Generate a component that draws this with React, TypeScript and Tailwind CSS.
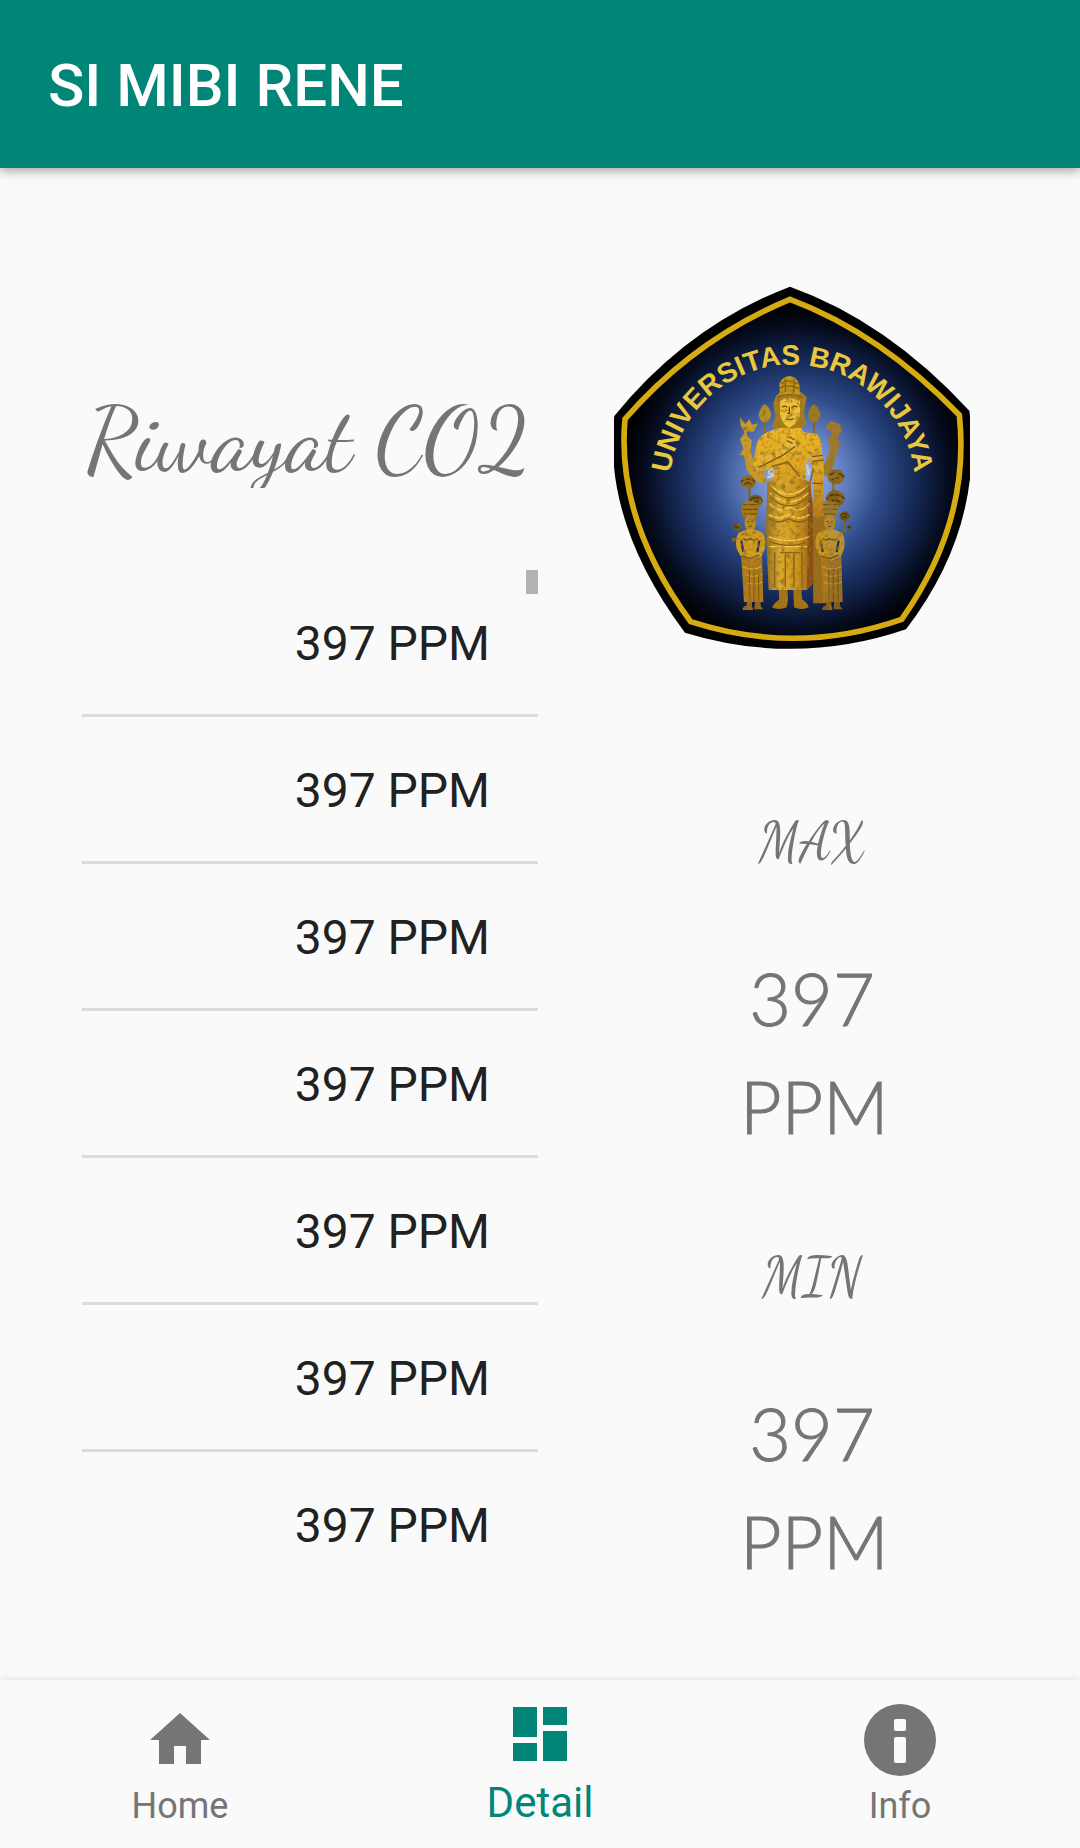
const readings = [397, 397, 397, 397, 397, 397, 397];

const stats = [
  { label: "MAX", value: 397 },
  { label: "MIN", value: 397 },
];

function Attendant() {
  return (
    <g>
      <path d="M424 712 L432 696 L450 692 L470 698 L476 712 L470 742 H428 Z" fill="#a87814" />
      <path d="M430 704 H472 M428 718 H474 M430 732 H470" stroke="#5e430d" strokeWidth="3" />
      <ellipse cx="451" cy="758" rx="17" ry="24" fill="#c08d1c" />
      <path d="M442 755 h6 M454 755 h6 M446 769 h10" stroke="#5a3c0a" strokeWidth="3" />
      <path
        d="M442 778 H462 L488 788 Q500 806 494 838 L484 862 L456 874 L424 862 L410 836 Q404 806 416 788 Z"
        fill="#d29d24"
      />
      <path d="M424 812 L430 846 M478 812 L472 846" stroke="#27304a" strokeWidth="7" />
      <path d="M430 806 q10 8 20 0 q12 8 24 0 M424 858 L450 866 L478 856" stroke="#7a5510" strokeWidth="5" fill="none" />
      <path d="M424 862 Q456 882 486 862 L490 996 H432 Z" fill="#b27b1a" />
      <path d="M428 890 q28 14 58 0 M430 912 q28 14 58 0 M432 936 q28 12 56 0" stroke="#dfb03a" strokeWidth="3" fill="none" />
      <path d="M448 900 V992 M462 896 V994 M476 900 V992" stroke="#7d5310" strokeWidth="3" />
      <path d="M440 994 h16 v14 l4 12 h-32 q0 -10 12 -14 Z M466 994 h16 v14 l8 10 h-28 Z" fill="#94641a" />
    </g>
  );
}

function Lotus({ x, y, r, fill }: { x: number; y: number; r: number; fill: string }) {
  return (
    <g>
      <ellipse cx={x} cy={y} rx={r} ry={r * 0.9} fill={fill} />
      <path
        d={`M${x - r} ${y} q${r} ${-r * 0.9} ${r * 2} 0 M${x - r * 0.5} ${y + r * 0.4} q${r * 0.5} ${-r * 0.6} ${r} 0`}
        stroke="#46350f"
        strokeWidth="4"
        fill="none"
      />
    </g>
  );
}

function UniversityCrest() {
  return (
    <svg viewBox="42 48 1068 1092" className="h-auto w-[356px]" role="img" aria-label="Universitas Brawijaya">
      <defs>
        <radialGradient id="glow" gradientUnits="userSpaceOnUse" cx="590" cy="625" r="520">
          <stop offset="0" stopColor="#a9bef0" />
          <stop offset="0.25" stopColor="#6a86c8" />
          <stop offset="0.48" stopColor="#2f4c8a" />
          <stop offset="0.7" stopColor="#142754" />
          <stop offset="0.88" stopColor="#050b1c" />
          <stop offset="1" stopColor="#000" />
        </radialGradient>
        <linearGradient id="gold" x1="0" y1="0" x2="0" y2="1">
          <stop offset="0" stopColor="#efb82a" />
          <stop offset="0.5" stopColor="#dca424" />
          <stop offset="1" stopColor="#b87a1a" />
        </linearGradient>
        <linearGradient id="skirt" x1="0" y1="0" x2="1" y2="0">
          <stop offset="0" stopColor="#97701a" />
          <stop offset="0.3" stopColor="#dcab2e" />
          <stop offset="0.65" stopColor="#d0961f" />
          <stop offset="1" stopColor="#9a5f16" />
        </linearGradient>
        <filter id="carved" x="0" y="0" width="100%" height="100%">
          <feTurbulence type="fractalNoise" baseFrequency="0.07" numOctaves="3" seed="4" result="noise" />
          <feColorMatrix
            in="noise"
            type="matrix"
            values="0 0 0 0 0.3  0 0 0 0 0.18  0 0 0 0 0.02  3 0 0 0 -1.4"
            result="shade"
          />
          <feComposite in="shade" in2="SourceAlpha" operator="in" result="relief" />
          <feMerge>
            <feMergeNode in="SourceGraphic" />
            <feMergeNode in="relief" />
          </feMerge>
        </filter>
        <path id="motto-arc" d="M211 690 A368 368 0 1 1 943 690" />
      </defs>

      <path
        d="M570 50 Q861 154 1108 422 Q1153 770 918 1078 Q590 1190 255 1088 Q7 757 43 438 Q264 166 570 50 Z"
        fill="#000"
      />
      <path
        d="M570 88 Q842 190 1078 435 Q1112 755 905 1048 Q590 1158 272 1055 Q48 750 75 447 Q285 206 570 88 Z"
        fill="url(#glow)"
        stroke="#d6ab12"
        strokeWidth="17"
      />

      <text fill="#e8c83c" className="font-['Liberation_Sans',sans-serif] text-[84px] font-bold" textAnchor="middle">
        <textPath href="#motto-arc" startOffset="50%">
          UNIVERSITAS BRAWIJAYA
        </textPath>
      </text>

      <g filter="url(#carved)">
        <path
          d="M495 445 V490 M642 445 V490 M448 650 V690 M700 640 V690 M735 740 V790"
          stroke="#7b6420"
          strokeWidth="6"
        />
        <path d="M476 434 Q480 412 494 402 Q510 412 514 434 Q508 456 494 458 Q480 456 476 434 Z" fill="#b5912a" />
        <path d="M624 434 Q628 412 642 402 Q656 412 662 434 Q656 456 642 458 Q628 456 624 434 Z" fill="#9c7a22" />

        <path
          d="M420 442 L436 462 L448 448 L456 464 L474 460 L460 486 L440 484 L442 498 L456 512 L452 540 L462 586 L492 604 L500 640 L470 636 L440 600 L432 556 L418 556 L430 536 L420 508 L434 488 L422 466 Z"
          fill="#c99a2c"
        />
        <path
          d="M676 470 L692 454 L720 462 L726 484 L712 500 L720 526 L708 556 L700 592 L678 620 L664 600 L680 566 L690 536 L684 508 L696 490 Z"
          fill="#9f7a30"
        />

        <Lotus x={444} y={636} r={22} fill="#8f681d" />
        <Lotus x={708} y={620} r={25} fill="#8a641c" />
        <Lotus x={468} y={692} r={20} fill="#6f531b" />
        <Lotus x={706} y={686} r={28} fill="#7e5c1b" />
        <Lotus x={734} y={738} r={15} fill="#6d501b" />
        <Lotus x={412} y={770} r={12} fill="#7a571b" />
        <Lotus x={748} y={772} r={6} fill="#6d501b" />
        <Lotus x={400} y={810} r={7} fill="#7a571b" />

        <path d="M636 740 H676 L690 1000 H640 Z" fill="#9a6a1a" />
        <Attendant />
        <g transform="translate(238 0)" opacity="0.85">
          <Attendant />
        </g>

        <path
          d="M538 472 H602 L610 486 L650 492 Q668 510 666 552 L672 600 L668 700 L672 736 L650 744 L636 724 L642 640 L636 590 L624 560 L616 640 H510 L522 596 L470 606 L458 584 L468 530 Q476 496 504 486 Z"
          fill="url(#gold)"
        />
        <path d="M470 560 L540 530 L548 552 L476 602 L460 588 Z" fill="#e3b132" />
        <path d="M546 550 L556 512 L570 490 L584 498 L588 530 L570 544 L548 566 Z" fill="#ecbb3c" />
        <path
          d="M476 592 L548 556 L584 530 M560 512 L578 520 M568 500 L584 510 M636 560 L668 556 M638 574 L670 570 M636 640 L668 640"
          stroke="#76520f"
          strokeWidth="4"
          fill="none"
        />
        <path d="M516 590 L564 576 L600 620 M640 596 L630 640" stroke="#8c6416" strokeWidth="5" fill="none" />
        <path d="M504 604 L524 588 L522 620 L502 626 Z M618 580 L632 598 L628 618 L616 612 Z" fill="#c5d3ea" />

        <path d="M502 636 Q566 612 632 636 L640 760 L622 960 H506 L498 780 Z" fill="url(#skirt)" />
        <path d="M626 640 L638 700 L640 940 L620 960 Z" fill="#8a4e12" />
        <path
          d="M512 646 Q566 700 624 646 M510 670 Q566 722 626 668 M508 700 Q540 734 568 710 Q600 734 628 700 M506 734 q30 20 60 0 q30 20 62 0 M506 800 q60 24 122 0 M508 830 H622"
          stroke="#f2ce54"
          strokeWidth="4"
          fill="none"
        />
        <path
          d="M514 656 Q566 712 622 656 M510 682 Q566 734 626 680 M506 746 q30 20 60 0 q30 20 62 0 M508 814 q60 24 120 0 M540 848 H600 M556 852 V950 M582 852 V950 M524 846 V954 M606 846 V954"
          stroke="#8a5d14"
          strokeWidth="4"
          fill="none"
        />
        <path
          d="M536 960 H562 L564 990 L560 1012 Q536 1022 516 1012 Q526 996 538 988 Z M580 960 H604 L606 988 Q624 1000 626 1012 Q604 1022 582 1012 Z"
          fill="#a87218"
        />

        <path d="M528 378 L520 400 L526 440 L516 470 L536 474 H604 L618 462 L612 430 L620 380 L602 366 H540 Z" fill="#a87d1a" />
        <path d="M540 374 L538 340 Q548 320 568 318 Q590 320 598 344 L600 374 Z" fill="#c8951f" />
        <path
          d="M542 340 Q568 324 594 342 M540 354 Q568 340 598 356 M556 326 V366 M582 328 V366 M532 382 Q568 366 608 382"
          stroke="#805a12"
          strokeWidth="4"
          fill="none"
        />
        <path d="M540 392 Q568 378 600 392 L600 434 Q592 462 568 474 Q546 462 540 434 Z" fill="#f0c03a" />
        <path
          d="M546 412 q8 -7 16 0 M576 412 q8 -7 16 0 M568 410 V430 H562 M558 446 q10 6 22 0"
          stroke="#684509"
          strokeWidth="4"
          fill="none"
        />
      </g>
    </svg>
  );
}

function HomeIcon() {
  return (
    <svg viewBox="0 0 24 24" className="size-18" fill="currentColor" aria-hidden="true">
      <path d="M10 20v-6h4v6h5v-8h3L12 3 2 12h3v8z" />
    </svg>
  );
}

function DashboardIcon() {
  return (
    <svg viewBox="0 0 24 24" className="size-18" fill="currentColor" aria-hidden="true">
      <path d="M3 13h8V3H3v10zm0 8h8v-6H3v6zm10 0h8V11h-8v10zm0-18v6h8V3h-8z" />
    </svg>
  );
}

function InfoIcon() {
  return (
    <svg viewBox="0 0 72 72" className="size-18" aria-hidden="true">
      <circle cx="36" cy="36" r="36" fill="currentColor" />
      <rect x="30" y="15" width="12" height="12" rx="2" fill="#fafafa" />
      <rect x="30" y="33" width="12" height="26" rx="2" fill="#fafafa" />
    </svg>
  );
}

const tabs = [
  { label: "Home", Icon: HomeIcon, active: false },
  { label: "Detail", Icon: DashboardIcon, active: true },
  { label: "Info", Icon: InfoIcon, active: false },
];

export default function App() {
  return (
    <div className="flex min-h-screen flex-col bg-[#fafafa] font-[Roboto,sans-serif]">
      <header className="z-10 flex bg-[#008577] px-12 pt-[50px] pb-[46px] shadow-[0_3px_10px_rgba(0,0,0,0.35)]">
        <h1 className="text-[60px] leading-[72px] font-medium text-white">SI MIBI RENE</h1>
      </header>

      <main className="grid flex-1 grid-cols-2">
        <section className="pt-[220px] pr-0.5 pl-[82px]">
          <h2 className="h-[100px] overflow-hidden pl-1 font-['Dancing_Script','Liberation_Serif',serif] text-[90px] leading-[104px] whitespace-nowrap text-[#757575]">
            Riwayat CO2
          </h2>
          <div className="relative mt-[82px]">
            <span className="absolute top-0 right-0 h-6 w-3 bg-[#b3b3b3]" />
            <ul className="divide-y-3 divide-[#dcdcdc]">
              {readings.map((ppm, i) => (
                <li key={i} className="pt-[46px] pr-12 pb-[42px] text-right text-[48px] leading-[56px] text-[#212121]">
                  {ppm} PPM
                </li>
              ))}
            </ul>
          </div>
        </section>

        <section className="flex flex-col items-center pt-[118px] text-[#757575]">
          <div className="mr-9">
            <UniversityCrest />
          </div>
          <dl className="mt-[150px] flex flex-col gap-[75px] pl-1 text-center">
            {stats.map(({ label, value }) => (
              <div key={label}>
                <dt className="font-['Dancing_Script','Liberation_Serif',serif] text-[54px] leading-[84px]">
                  {label}
                </dt>
                <dd className="mx-auto mt-15 w-36 font-['Coming_Soon',Lato,sans-serif] text-[72px] leading-[108px] font-light [-webkit-text-stroke:1px_#757575]">
                  {value} PPM
                </dd>
              </div>
            ))}
          </dl>
        </section>
      </main>

      <nav className="flex h-42 bg-[#fafafa] shadow-[0_0_8px_rgba(0,0,0,0.12)]">
        {tabs.map(({ label, Icon, active }) => (
          <a
            key={label}
            href={`#${label.toLowerCase()}`}
            aria-current={active ? "page" : undefined}
            className={
              active
                ? "flex flex-1 flex-col items-center justify-end gap-2 pb-5 text-[42px] leading-[50px] text-[#008577]"
                : "flex flex-1 flex-col items-center justify-end gap-2 pb-5 text-[36px] leading-[44px] text-[#757575]"
            }
          >
            <Icon />
            {label}
          </a>
        ))}
      </nav>
    </div>
  );
}
